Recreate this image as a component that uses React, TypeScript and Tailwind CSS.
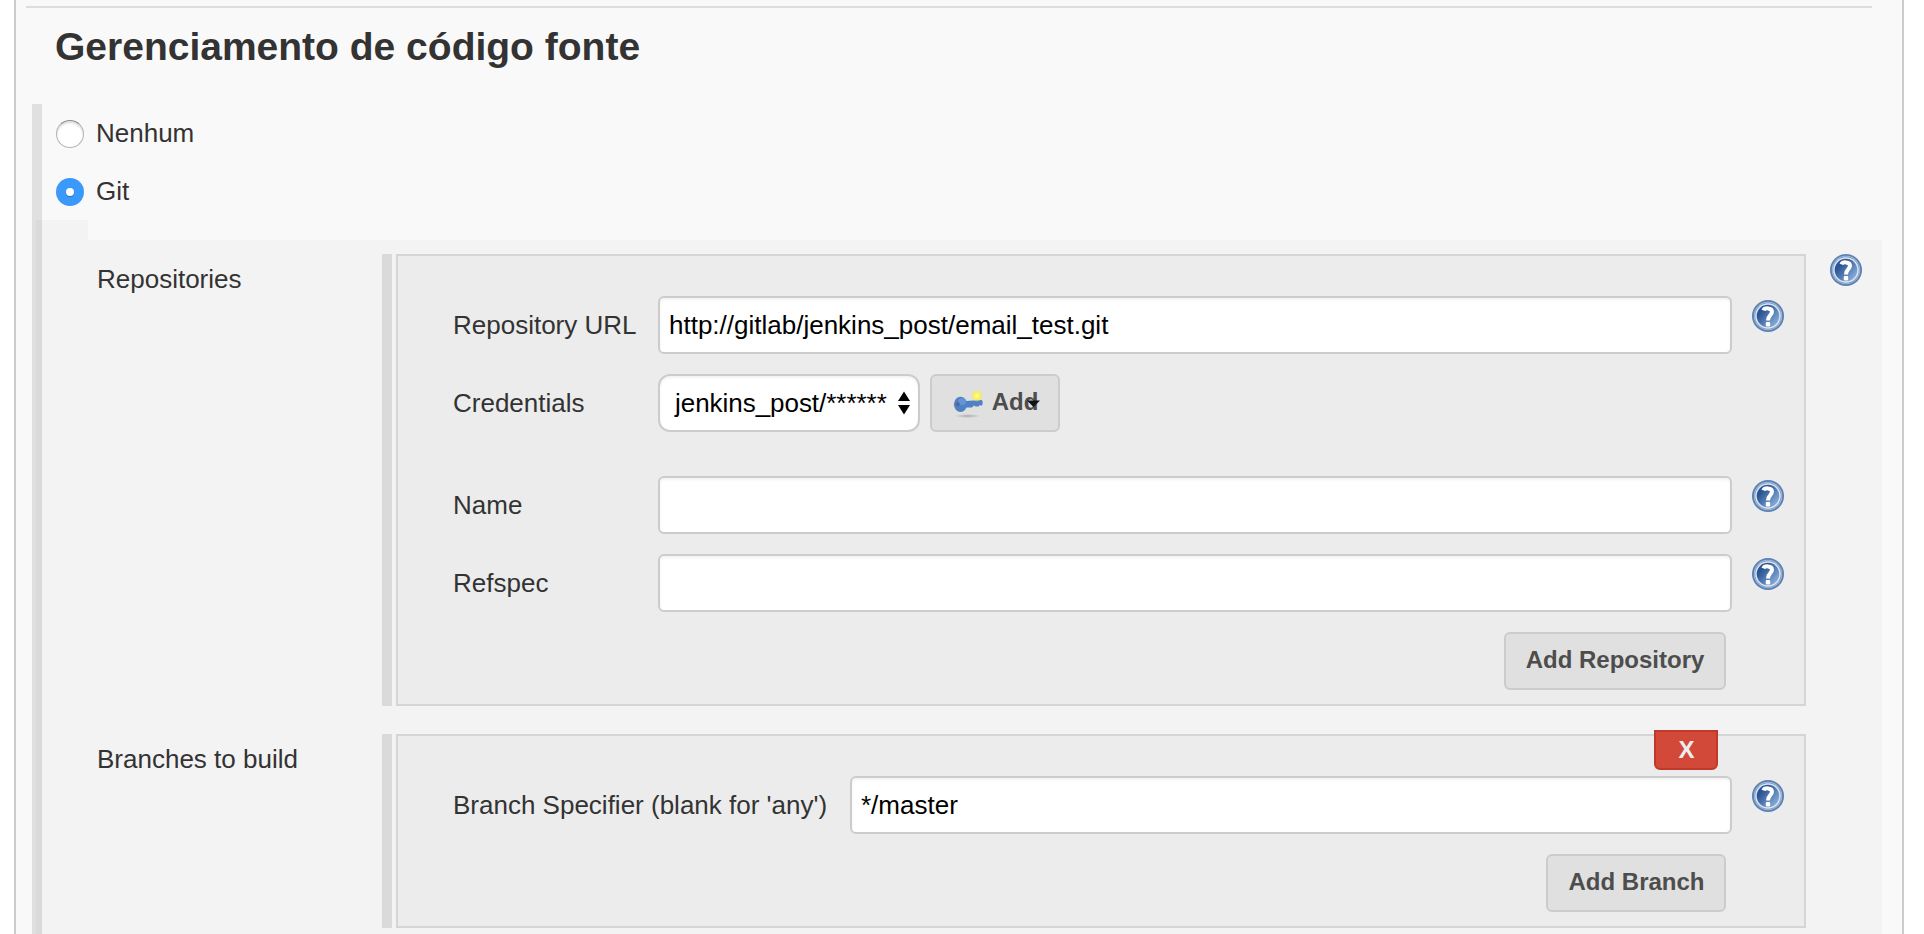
import type { ReactNode } from "react";

function HelpIcon({ className = "" }: { className?: string }) {
  return (
    <svg viewBox="0 0 32 32" className={`size-8 shrink-0 ${className}`} aria-label="Help">
      <defs>
        <linearGradient id="help-fill" x1="0.1" y1="0.2" x2="0.9" y2="0.9">
          <stop offset="0.15" stopColor="#2a5594" />
          <stop offset="1" stopColor="#8db1dc" />
        </linearGradient>
      </defs>
      <circle cx="16" cy="16" r="16" fill="#5b80b4" />
      <circle cx="16" cy="16" r="14.2" fill="#a9bfdb" />
      <circle cx="16" cy="16" r="13.4" fill="#7595c2" />
      <circle cx="16" cy="16" r="12.8" fill="#dce5f1" />
      <circle cx="16" cy="16" r="11.3" fill="url(#help-fill)" />
      <path
        d="M11.4 10.4C12.4 7.6 20 7.4 20 11.8C20 15.2 16 15.2 16 20.4"
        fill="none"
        stroke="#fff"
        strokeWidth="4"
      />
      <rect x="13.8" y="22" width="4.4" height="4.4" rx="0.8" fill="#fff" />
    </svg>
  );
}

function KeyIcon() {
  return (
    <svg viewBox="0 0 32 32" className="size-8 shrink-0">
      <defs>
        <radialGradient id="spark">
          <stop offset="0.1" stopColor="#fffb9a" />
          <stop offset="0.6" stopColor="#fbf04e" />
          <stop offset="1" stopColor="#f5e85a" stopOpacity="0.2" />
        </radialGradient>
        <radialGradient id="key-shadow">
          <stop offset="0" stopColor="#000" stopOpacity="0.24" />
          <stop offset="1" stopColor="#000" stopOpacity="0" />
        </radialGradient>
      </defs>
      <ellipse cx="16.5" cy="30" rx="13" ry="2" fill="url(#key-shadow)" />
      <path
        d="M14.5 15L30.5 14Q32 14.5 31.7 16.5Q31.5 19.6 30.5 19.8L29 19L27.5 20.5H24.5L23 19.4L21 21.5H14.5Z"
        fill="#4f82c4"
      />
      <ellipse cx="9.5" cy="18.3" rx="6.6" ry="7.6" fill="#4f82c4" />
      <ellipse cx="11" cy="15.6" rx="4" ry="3.4" fill="#6594d0" />
      <ellipse cx="6.9" cy="18.2" rx="1.7" ry="2.2" fill="#50698f" />
      <circle cx="26" cy="9.8" r="5.6" fill="url(#spark)" />
    </svg>
  );
}

function Radio({ label, checked = false }: { label: string; checked?: boolean }) {
  return (
    <label className="flex h-[58px] items-center">
      {checked ? (
        <span className="flex size-7 items-center justify-center rounded-full bg-[#3b99fc]">
          <span className="size-2 rounded-full bg-white shadow-[0_1px_1px_rgba(0,0,0,0.25)]" />
        </span>
      ) : (
        <span className="size-7 rounded-full border border-[#b4b4b4] border-t-[#8e8e8e] bg-white shadow-[inset_0_2px_2px_rgba(0,0,0,0.14)]" />
      )}
      <span className="-mt-0.5 pl-3">{label}</span>
    </label>
  );
}

function Field({
  label,
  labelWidth,
  value = "",
}: {
  label: string;
  labelWidth: string;
  value?: string;
}) {
  return (
    <div className="flex h-[58px]">
      <span className={`flex shrink-0 items-center whitespace-nowrap ${labelWidth}`}>{label}</span>
      <input
        type="text"
        defaultValue={value}
        className="h-full min-w-0 flex-1 rounded-md border-2 border-[#ccc] bg-white px-[9px] text-black shadow-[inset_0_2px_3px_rgba(0,0,0,0.05)] outline-none"
      />
      <HelpIcon className="mt-1 ml-5" />
    </div>
  );
}

function Button({ children, className = "" }: { children: ReactNode; className?: string }) {
  return (
    <button
      className={`flex h-[58px] items-center justify-center rounded-md border-2 border-[#ccc] bg-[#e0e0e0] pb-0.5 text-2xl font-bold text-[#4d4d4d] ${className}`}
    >
      {children}
    </button>
  );
}

function Section({
  title,
  className = "",
  children,
}: {
  title: string;
  className?: string;
  children: ReactNode;
}) {
  return (
    <div className={`flex ${className}`}>
      <div className="w-[285px] shrink-0 pt-2.5">{title}</div>
      <div className="mr-1 w-2.5 shrink-0 bg-[#dadada]" />
      <div className="w-[1410px] shrink-0 border-2 border-[#d5d5d5] bg-[#ececec] pr-5 pl-[55px]">
        {children}
      </div>
    </div>
  );
}

export default function App() {
  return (
    <div className="h-[934px] w-[1924px] overflow-hidden bg-white pr-5 pl-3.5 font-['Liberation_Sans',Arial,sans-serif] text-[26px] leading-[30px] text-[#333]">
      <main className="flex h-full flex-col border-x-2 border-[#ccc] bg-[#f9f9f9] pt-1.5">
        <div className="mr-[30px] ml-2.5 h-0.5 shrink-0 bg-[#ddd]" />
        <h2 className="mt-4 ml-[39px] h-20 shrink-0 text-[39px] leading-[46px] font-bold">
          Gerenciamento de código fonte
        </h2>
        <div className="mr-5 ml-4 flex flex-1">
          <div className="flex w-2.5 shrink-0 flex-col bg-[#e0e0e0] pt-[116px] pl-1">
            <div className="flex-1 bg-[#dadada]" />
          </div>
          <div className="flex flex-1 flex-col">
            <div className="h-[116px] pl-3.5 pt-px">
              <Radio label="Nenhum" />
              <Radio label="Git" checked />
            </div>
            <div className="h-5 w-[46px] bg-[#f3f3f3]" />
            <div className="flex flex-1 flex-col bg-[#f3f3f3] pt-3.5 pr-5 pl-[55px]">
              <div className="flex justify-between">
                <Section title="Repositories" className="h-[452px]">
                  <div className="flex flex-col gap-5 pt-10">
                    <Field
                      label="Repository URL"
                      labelWidth="w-[205px]"
                      value="http://gitlab/jenkins_post/email_test.git"
                    />
                    <div className="mb-6 flex h-[58px]">
                      <span className="flex w-[205px] shrink-0 items-center">Credentials</span>
                      <div className="flex w-[262px] items-center justify-between rounded-xl border-2 border-[#ccc] bg-white pr-2 pl-[15px] text-black shadow-[inset_0_2px_3px_rgba(0,0,0,0.05)]">
                        <span className="tracking-[-0.04px]">jenkins_post/******</span>
                        <svg viewBox="0 0 12 24" className="h-6 w-3">
                          <path d="M6 0.5L12 10H0ZM6 23.5L0 14H12Z" fill="#000" />
                        </svg>
                      </div>
                      <Button className="relative ml-2.5 w-[130px] gap-[9px] pr-px">
                        <KeyIcon />
                        <span>Add</span>
                        <svg
                          viewBox="0 0 14 8"
                          className="absolute top-[24px] right-[18px] h-2 w-3.5"
                        >
                          <path d="M1 0.5H14L7.5 7Z" fill="#111" />
                        </svg>
                      </Button>
                    </div>
                    <Field label="Name" labelWidth="w-[205px]" />
                    <Field label="Refspec" labelWidth="w-[205px]" />
                    <Button className="mr-[58px] w-[222px] self-end">Add Repository</Button>
                  </div>
                </Section>
                <HelpIcon />
              </div>
              <Section title="Branches to build" className="mt-7 h-[194px]">
                <div className="relative flex flex-col gap-5 pt-10">
                  <Field
                    label="Branch Specifier (blank for 'any')"
                    labelWidth="w-[397px]"
                    value="*/master"
                  />
                  <Button className="mr-[58px] w-[180px] self-end pl-px">Add Branch</Button>
                  <button className="absolute -top-1.5 right-[66px] flex h-10 w-16 items-center justify-center rounded-b-md border-2 border-[#c03a2b] bg-[#d24939] pl-px text-2xl font-bold text-[#eee]">
                    X
                  </button>
                </div>
              </Section>
            </div>
          </div>
        </div>
      </main>
    </div>
  );
}
